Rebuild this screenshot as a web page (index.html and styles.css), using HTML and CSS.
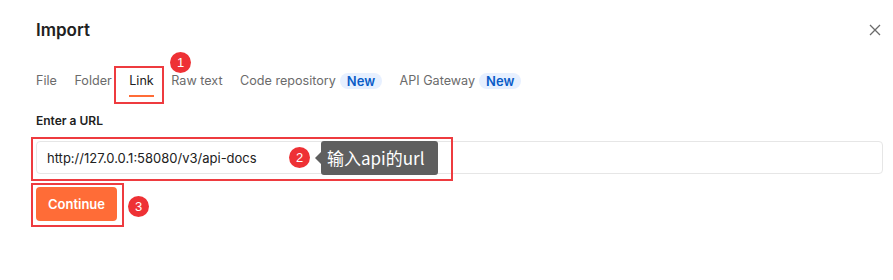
FILE: index.html
```html
<!DOCTYPE html>
<html lang="en">
<head>
<meta charset="utf-8">
<title>Import</title>
<link rel="stylesheet" href="styles.css">
</head>
<body>
<div class="dialog">
  <div class="header">
    <div class="title">Import</div>
    <button class="close" aria-label="Close">
      <svg width="12" height="12" viewBox="0 0 12 12"><path d="M1 1L11 11M11 1L1 11" stroke="#6b6b6b" stroke-width="1.3" fill="none"/></svg>
    </button>
  </div>
  <div class="tabs">
    <div class="tab">File</div>
    <div class="tab">Folder</div>
    <div class="tab active">Link</div>
    <div class="tab">Raw text</div>
    <div class="tab">Code repository <span class="pill">New</span></div>
    <div class="tab">API Gateway <span class="pill">New</span></div>
  </div>
  <div class="label">Enter a URL</div>
  <div class="input">http://127.0.0.1:58080/v3/api-docs</div>
  <button class="btn">Continue</button>

  <div class="mark mark-1"></div>
  <div class="mark mark-2"></div>
  <div class="mark mark-3"></div>
  <div class="num num-1">1</div>
  <div class="num num-2">2</div>
  <div class="num num-3">3</div>
  <div class="tip">输入api的url</div>
</div>
</body>
</html>
```
FILE: styles.css
```css
html, body {
  margin: 0;
  background: #ffffff;
}
body {
  font-family: Inter, "Noto Sans", sans-serif;
  color: #212121;
}
.dialog {
  position: relative;
  padding: 0 10px 0 36px;
  height: 280px;
  box-sizing: border-box;
}
.header {
  display: flex;
  justify-content: space-between;
  align-items: center;
  padding-top: 18px;
  height: 24px;
}
.title {
  font-size: 17px;
  font-weight: 600;
  line-height: 24px;
  color: #212121;
}
.close {
  border: 0;
  background: none;
  padding: 0;
  margin-right: 2px;
  width: 12px;
  height: 12px;
  display: flex;
}
.tabs {
  display: flex;
  gap: 17.5px;
  margin-top: 31px;
}
.tab {
  font-size: 12.6px;
  line-height: 16px;
  color: #6b6b6b;
  padding-bottom: 8px;
  display: flex;
  align-items: center;
  gap: 4px;
  position: relative;
}
.tab.active {
  color: #212121;
}
.tab.active::after {
  content: "";
  position: absolute;
  left: 0;
  right: 0;
  bottom: 0;
  height: 2px;
  background: #ff6c37;
}
.pill {
  background: #e7f0ff;
  color: #0a5cc7;
  font-weight: 600;
  font-size: 13px;
  line-height: 16px;
  padding: 0 7px;
  border-radius: 8px;
}
.label {
  margin-top: 16px;
  font-size: 12px;
  font-weight: 600;
  line-height: 16px;
  color: #212121;
}
.input {
  margin-top: 12px;
  height: 33px;
  box-sizing: border-box;
  border: 1px solid #e6e6e6;
  border-radius: 4px;
  padding: 0 10px;
  display: flex;
  align-items: center;
  font-size: 13px;
  color: #212121;
}
.btn {
  margin-top: 13px;
  width: 81px;
  height: 34px;
  border: 0;
  border-radius: 4px;
  background: #ff6c37;
  color: #ffffff;
  font-family: Inter, sans-serif;
  font-weight: 600;
  font-size: 13px;
  padding: 0;
  display: block;
}
.mark {
  position: absolute;
  border: 2px solid #ee3b3f;
  box-sizing: border-box;
}
.mark-1 { left: 114px; top: 66px; width: 50px; height: 38px; }
.mark-2 { left: 31px; top: 137px; width: 422px; height: 44px; }
.mark-3 { left: 31px; top: 183px; width: 93px; height: 44px; }
.num {
  position: absolute;
  width: 21px;
  height: 21px;
  border-radius: 50%;
  background: #ee3135;
  color: #ffffff;
  font-family: "Liberation Sans", Arial, sans-serif;
  font-size: 13px;
  line-height: 21px;
  text-align: center;
}
.num-1 { left: 170px; top: 52px; }
.num-2 { left: 289px; top: 147px; }
.num-3 { left: 128px; top: 196px; }
.tip {
  position: absolute;
  left: 321px;
  top: 141px;
  width: 117px;
  height: 34px;
  background: #5f5f5f;
  border-radius: 3px;
  color: #ffffff;
  font-family: "Noto Sans CJK SC", "Noto Sans", sans-serif;
  font-size: 17px;
  line-height: 34px;
  padding-left: 6px;
  box-sizing: border-box;
}
.tip::before {
  content: "";
  position: absolute;
  left: -6px;
  top: 11px;
  border-style: solid;
  border-width: 6px 6px 6px 0;
  border-color: transparent #5f5f5f transparent transparent;
}
```
